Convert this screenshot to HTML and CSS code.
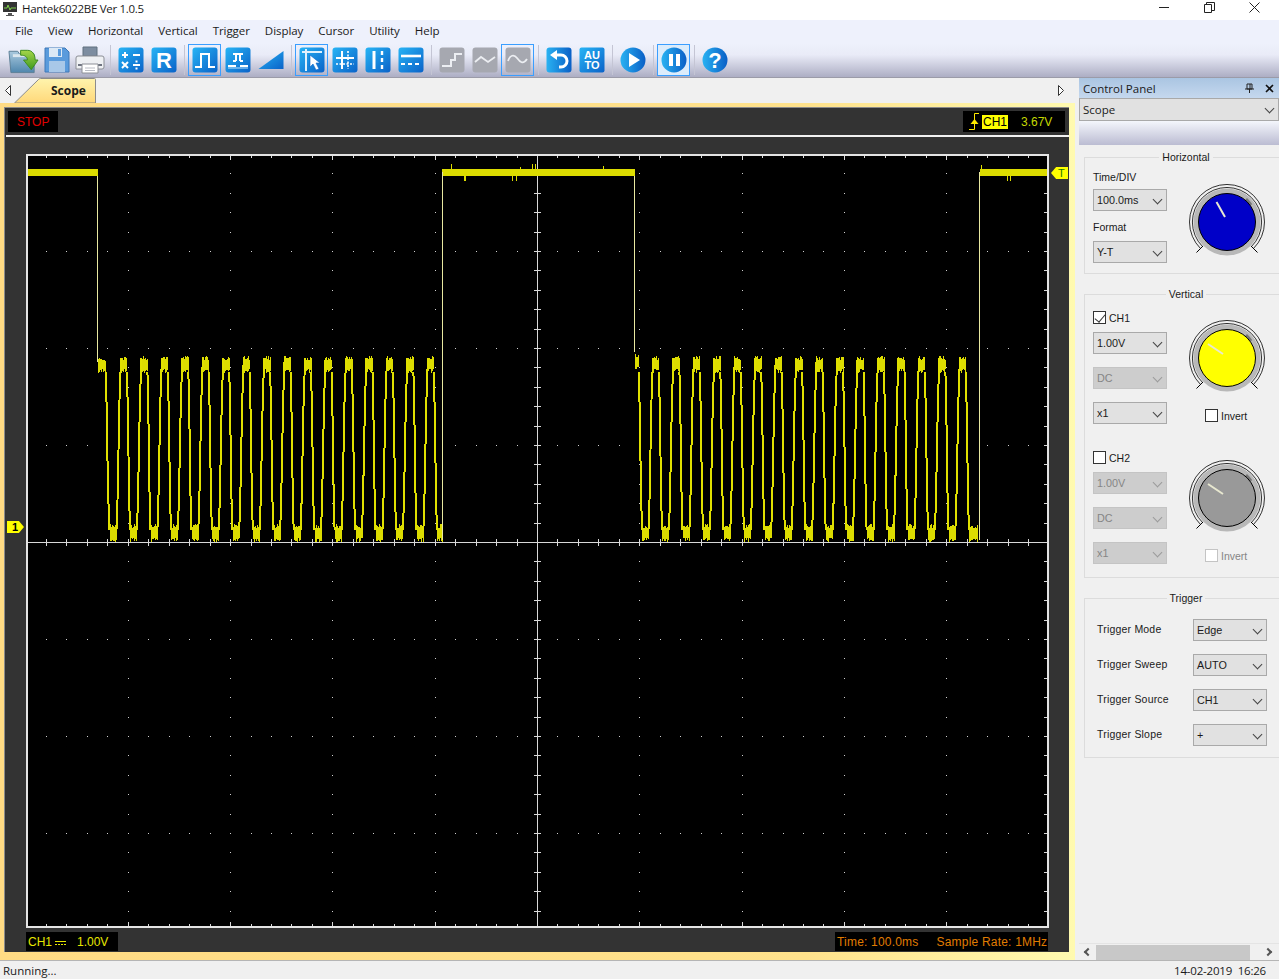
FILE: index.html
```html
<!DOCTYPE html>
<html lang="en">
<head>
    <meta charset="UTF-8">
    <title>Hantek6022BE Ver 1.0.5</title>
    <link rel="stylesheet" href="styles.css">
</head>
<body>
<svg class="defs" width="0" height="0">
    <defs>
        <linearGradient id="blue" x1="0" y1="0" x2="1" y2="1">
            <stop offset="0" stop-color="#27b4f5"/>
            <stop offset="1" stop-color="#0a62c8"/>
        </linearGradient>
        <linearGradient id="round" x1="0" y1="0" x2="1" y2="0">
            <stop offset="0" stop-color="#29b2f2"/>
            <stop offset="1" stop-color="#0a5fc6"/>
        </linearGradient>
        <linearGradient id="folder" x1="0" y1="0" x2="0" y2="1">
            <stop offset="0" stop-color="#a9c9de"/>
            <stop offset="1" stop-color="#4f86ad"/>
        </linearGradient>
        <linearGradient id="green" x1="0" y1="0" x2="0" y2="1">
            <stop offset="0" stop-color="#a5d64a"/>
            <stop offset="1" stop-color="#3f9a1e"/>
        </linearGradient>
        <symbol id="knob" viewBox="0 0 76 76">
            <path d="M11.5 64.5A37.5 37.5 0 1 1 64.5 64.5M13.5 62.5A34.6 34.6 0 1 1 62.5 62.5" fill="none" stroke="#000" stroke-width=".8"/>
            <path d="M14 62L7.5 68.5M62 62L68.5 68.5" stroke="#000" stroke-width="1"/>
            <circle cx="38" cy="38" r="33.5" fill="#b8b8b8"/>
            <path d="M57 15A30 30 0 0 1 62 21" fill="none" stroke="#777" stroke-width="3"/>
            <circle cx="38" cy="38" r="28.5" fill="currentColor" stroke="#000" stroke-width="1"/>
        </symbol>
    </defs>
</svg>

<div class="titlebar">
    <svg class="appicon" width="16" height="16" viewBox="0 0 16 16">
        <rect x="1" y="1" width="14" height="10" fill="#333"/>
        <path d="M2 7h3l1-3 2 5 1-2h5" fill="none" stroke="#7fd04a" stroke-width="1"/>
        <path d="M6 12h4v2H6zM4 14h8v1H4z" fill="#555"/>
    </svg>
    <span class="apptitle">Hantek6022BE Ver 1.0.5</span>
    <div class="winbtns">
        <svg width="11" height="11" viewBox="0 0 11 11"><path d="M0 5.5h10" stroke="#222"/></svg>
        <svg width="11" height="11" viewBox="0 0 11 11"><path d="M.5 2.5h7v8h-7zM2.5 2.5v-2h8v8h-3" fill="none" stroke="#222"/></svg>
        <svg width="11" height="11" viewBox="0 0 11 11"><path d="M.5.5l10 10M10.5.5l-10 10" stroke="#222"/></svg>
    </div>
</div>

<div class="menubar">
    <span>File</span>
    <span>View</span>
    <span>Horizontal</span>
    <span>Vertical</span>
    <span>Trigger</span>
    <span>Display</span>
    <span>Cursor</span>
    <span>Utility</span>
    <span>Help</span>
</div>

<div class="toolbar">
    <div class="tool">
        <svg width="32" height="30" viewBox="0 0 32 30">
            <path d="M1 6h9l2 3h15v19H3z" fill="url(#folder)" stroke="#5c7f96"/>
            <path d="M5 9h22v3H5z" fill="#d9e6ee"/>
            <path d="M13 5h7c5 0 8 4 8 10h3l-7 10-8-10h4c0-3-2-5-7-5z" fill="url(#green)" stroke="#3e8a22"/>
        </svg>
    </div>
    <div class="tool">
        <svg width="26" height="28" viewBox="0 0 26 28">
            <path d="M1 2h20l4 4v20H1z" fill="#5a9bdc" stroke="#3f79b8"/>
            <path d="M5 2h13v9H5z" fill="#dce9f5"/>
            <path d="M14 3h3v7h-3z" fill="#5a9bdc"/>
            <path d="M5 15h16v11H5z" fill="#a8c8e8"/>
        </svg>
    </div>
    <div class="tool">
        <svg width="30" height="30" viewBox="0 0 30 30">
            <path d="M8 2h14v9H8z" fill="#7d8da0" stroke="#60707f"/>
            <path d="M3 11h24q2 0 2 2v9q0 2-2 2H1V13q0-2 2-2z" fill="#eef0f3" stroke="#8c8f96"/>
            <path d="M3 19h24v2H3z" fill="#6f7480"/>
            <path d="M7 19h16v9H7z" fill="#fff" stroke="#8c8f96"/>
            <path d="M10 23h10M10 25.5h10" stroke="#b9bcc4"/>
        </svg>
    </div>
    <i class="sep"></i>
    <div class="tool">
        <svg width="26" height="26" viewBox="0 0 26 26">
            <rect x=".5" y=".5" width="25" height="25" rx="3" fill="url(#blue)"/>
            <g stroke="#fff" stroke-width="2">
                <path d="M4 8h6M7 5v6M15 8h7M4 15l6 6M10 15l-6 6M15 18h7"/>
            </g>
            <path d="M17.5 13.5h2v2h-2zM17.5 20.5h2v2h-2z" fill="#fff"/>
        </svg>
    </div>
    <div class="tool">
        <svg width="26" height="26" viewBox="0 0 26 26">
            <rect x=".5" y=".5" width="25" height="25" rx="3" fill="url(#blue)"/>
            <text x="13" y="20.5" class="tiletext big">R</text>
        </svg>
    </div>
    <i class="sep"></i>
    <div class="tool active">
        <svg width="26" height="26" viewBox="0 0 26 26">
            <rect x=".5" y=".5" width="25" height="25" rx="3" fill="url(#blue)"/>
            <path d="M3 20h6V7h8v13h6" fill="none" stroke="#fff" stroke-width="2"/>
        </svg>
    </div>
    <div class="tool">
        <svg width="26" height="26" viewBox="0 0 26 26">
            <rect x=".5" y=".5" width="25" height="25" rx="3" fill="url(#blue)"/>
            <path d="M8 7h10M11 7v7M15 7v7M8 14h3M15 14h3M3 19h8M15 19h8" fill="none" stroke="#fff" stroke-width="2"/>
            <path d="M3 21h20" stroke="#bfe2fb" stroke-width="1"/>
        </svg>
    </div>
    <div class="tool">
        <svg width="26" height="22" viewBox="0 0 26 22">
            <path d="M.5 20L25.5 2v18z" fill="url(#blue)"/>
        </svg>
    </div>
    <i class="sep"></i>
    <div class="tool active">
        <svg width="26" height="26" viewBox="0 0 26 26">
            <rect x=".5" y=".5" width="25" height="25" rx="3" fill="url(#blue)"/>
            <path d="M3 5h20M7 2v22" stroke="#dff1fd" stroke-width="2"/>
            <path d="M11 8v12l3-3 3 6 3-1-3-6h4z" fill="#fff" stroke="#0a62c8" stroke-width=".6"/>
        </svg>
    </div>
    <div class="tool">
        <svg width="26" height="26" viewBox="0 0 26 26">
            <rect x=".5" y=".5" width="25" height="25" rx="3" fill="url(#blue)"/>
            <path d="M4 11h18M10 4v18" stroke="#fff" stroke-width="2"/>
            <path d="M4 17h18M16 4v18" stroke="#fff" stroke-width="1.6" stroke-dasharray="2 1.5"/>
        </svg>
    </div>
    <div class="tool">
        <svg width="26" height="26" viewBox="0 0 26 26">
            <rect x=".5" y=".5" width="25" height="25" rx="3" fill="url(#blue)"/>
            <path d="M9 4v18" stroke="#fff" stroke-width="3"/>
            <path d="M17 4v18" stroke="#fff" stroke-width="2.4" stroke-dasharray="4 3"/>
        </svg>
    </div>
    <div class="tool">
        <svg width="26" height="26" viewBox="0 0 26 26">
            <rect x=".5" y=".5" width="25" height="25" rx="3" fill="url(#blue)"/>
            <path d="M3 9h20" stroke="#fff" stroke-width="2.6"/>
            <path d="M3 17h20" stroke="#fff" stroke-width="2.2" stroke-dasharray="4 3"/>
        </svg>
    </div>
    <i class="sep"></i>
    <div class="tool">
        <svg width="26" height="26" viewBox="0 0 26 26">
            <rect x=".5" y=".5" width="25" height="25" rx="3" fill="#a6a8b0"/>
            <path d="M3 19h9v-6h4V7h7" fill="none" stroke="#eceef2" stroke-width="2"/>
        </svg>
    </div>
    <div class="tool">
        <svg width="26" height="26" viewBox="0 0 26 26">
            <rect x=".5" y=".5" width="25" height="25" rx="3" fill="#a6a8b0"/>
            <path d="M3 15l6-5 7 5 7-5" fill="none" stroke="#eceef2" stroke-width="1.8"/>
        </svg>
    </div>
    <div class="tool active">
        <svg width="26" height="26" viewBox="0 0 26 26">
            <rect x=".5" y=".5" width="25" height="25" rx="3" fill="#a6a8b0"/>
            <path d="M3 14c2-6 6-7 9-3s6 7 10 1" fill="none" stroke="#eceef2" stroke-width="1.8"/>
        </svg>
    </div>
    <i class="sep"></i>
    <div class="tool">
        <svg width="26" height="26" viewBox="0 0 26 26">
            <rect x=".5" y=".5" width="25" height="25" rx="3" fill="url(#round)"/>
            <path d="M10 8h5a5.5 5.5 0 0 1 0 12h-2" fill="none" stroke="#fff" stroke-width="3"/>
            <path d="M11 3v10l-7-5z" fill="#fff"/>
        </svg>
    </div>
    <div class="tool">
        <svg width="26" height="26" viewBox="0 0 26 26">
            <rect x=".5" y=".5" width="25" height="25" rx="2" fill="url(#blue)"/>
            <text x="13" y="11.5" class="tiletext">AU</text>
            <text x="13" y="22" class="tiletext">TO</text>
        </svg>
    </div>
    <i class="sep"></i>
    <div class="tool">
        <svg width="26" height="26" viewBox="0 0 26 26">
            <circle cx="13" cy="13" r="12.5" fill="url(#round)"/>
            <path d="M9 6l11 7-11 7z" fill="#fff"/>
        </svg>
    </div>
    <i class="sep"></i>
    <div class="tool active pressed">
        <svg width="26" height="26" viewBox="0 0 26 26">
            <circle cx="13" cy="13" r="12.5" fill="url(#round)"/>
            <path d="M8 7h4v12H8zM15 7h4v12h-4z" fill="#fff"/>
        </svg>
    </div>
    <i class="sep"></i>
    <div class="tool">
        <svg width="26" height="26" viewBox="0 0 26 26">
            <circle cx="13" cy="13" r="12.5" fill="url(#round)"/>
            <text x="13" y="20.5" class="tiletext big">?</text>
        </svg>
    </div>
</div>

<div class="main">
    <div class="workspace">
        <div class="tabstrip">
            <svg class="arrow left" width="6" height="11" viewBox="0 0 6 11"><path d="M5.5.5v10L.5 5.5z" fill="#fff" stroke="#333"/></svg>
            <div class="tab">
                <svg class="tabshape" width="82" height="25" viewBox="0 0 82 25">
                    <defs>
                        <linearGradient id="tabfill" x1="0" y1="0" x2="0" y2="1">
                            <stop offset="0" stop-color="#fff4ad"/>
                            <stop offset="1" stop-color="#ffd87a"/>
                        </linearGradient>
                    </defs>
                    <path d="M.5 25L24.5 1.5q1-1 2-1H80.5q1 0 1 1V25z" fill="url(#tabfill)" stroke="#8c8c8c"/>
                </svg>
                <span>Scope</span>
            </div>
            <svg class="arrow right" width="6" height="11" viewBox="0 0 6 11"><path d="M.5.5v10l5-5z" fill="#fff" stroke="#333"/></svg>
        </div>
        <div class="scopeframe">
            <div class="scope">
                <div class="scopetop">
                    <div class="lcd stop">STOP</div>
                    <div class="lcd triginfo">
                        <svg width="12" height="18" viewBox="0 0 12 18">
                            <path d="M11 .5H6.5v16H1" fill="none" stroke="#ffea00"/>
                            <path d="M6.5 6l4 5h-8z" fill="#ffea00"/>
                        </svg>
                        <span class="chip">CH1</span>
                        <span class="trigval">3.67V</span>
                    </div>
                </div>
                <div class="rule"></div>
                <div class="plot">
                    <svg id="screen" width="1019" height="770" viewBox="28 156 1019 770" shape-rendering="crispEdges"></svg>
                    <div class="marker one">1</div>
                    <div class="marker tee">T</div>
                </div>
                <div class="scopebottom">
                    <div class="lcd chinfo">
                        <span>CH1</span>
                        <svg width="11" height="5" viewBox="0 0 11 5">
                            <path d="M0 1.5h11" stroke="#e6e600"/>
                            <path d="M0 4.5h11" stroke="#e6e600" stroke-dasharray="2 1"/>
                        </svg>
                        <span class="chval">1.00V</span>
                    </div>
                    <div class="lcd timeinfo">
                        <span>Time: 100.0ms</span>
                        <span>Sample Rate: 1MHz</span>
                    </div>
                </div>
            </div>
        </div>
    </div>

    <div class="side">
        <div class="sidehead">
            <span>Control Panel</span>
            <div class="headbtns">
                <svg width="9" height="10" viewBox="0 0 9 10"><path d="M2 1h5v5H2zM0 6h9M4.5 6v4M5 1v5" fill="none" stroke="#222"/></svg>
                <svg width="9" height="9" viewBox="0 0 9 9"><path d="M1 1l7 7M8 1L1 8" stroke="#111" stroke-width="1.6"/></svg>
            </div>
        </div>
        <div class="sidecombo">Scope</div>
        <div class="sidestrip"></div>
        <div class="sidebody">
            <fieldset class="group horizontal">
                <legend>Horizontal</legend>
                <div class="cols">
                    <div class="leftcol">
                        <div class="lbl">Time/DIV</div>
                        <div class="combo">100.0ms</div>
                        <div class="lbl second">Format</div>
                        <div class="combo">Y-T</div>
                    </div>
                    <div class="rightcol">
                        <svg class="knob" width="76" height="76" color="#0000c8">
                            <use href="#knob"/>
                            <path d="M27.5 18L36 33" stroke="#e8e8d0" stroke-width="2" shape-rendering="auto"/>
                        </svg>
                    </div>
                </div>
            </fieldset>

            <fieldset class="group vertical">
                <legend>Vertical</legend>
                <div class="cols channel">
                    <div class="leftcol">
                        <label class="chk"><i class="box on"></i>CH1</label>
                        <div class="combo">1.00V</div>
                        <div class="combo off">DC</div>
                        <div class="combo">x1</div>
                    </div>
                    <div class="rightcol">
                        <svg class="knob" width="76" height="76" color="#ffff00">
                            <use href="#knob"/>
                            <path d="M19 24L34 34" stroke="#e8e8d0" stroke-width="2" shape-rendering="auto"/>
                        </svg>
                        <label class="chk inv"><i class="box"></i>Invert</label>
                    </div>
                </div>
                <div class="cols channel">
                    <div class="leftcol">
                        <label class="chk"><i class="box"></i>CH2</label>
                        <div class="combo off">1.00V</div>
                        <div class="combo off">DC</div>
                        <div class="combo off">x1</div>
                    </div>
                    <div class="rightcol">
                        <svg class="knob" width="76" height="76" color="#999999">
                            <use href="#knob"/>
                            <path d="M19 24L34 34" stroke="#e8e8d0" stroke-width="2" shape-rendering="auto"/>
                        </svg>
                        <label class="chk inv dim"><i class="box"></i>Invert</label>
                    </div>
                </div>
            </fieldset>

            <fieldset class="group trigger">
                <legend>Trigger</legend>
                <div class="trigrow"><span>Trigger Mode</span><div class="combo">Edge</div></div>
                <div class="trigrow"><span>Trigger Sweep</span><div class="combo">AUTO</div></div>
                <div class="trigrow"><span>Trigger Source</span><div class="combo">CH1</div></div>
                <div class="trigrow"><span>Trigger Slope</span><div class="combo">+</div></div>
            </fieldset>
        </div>
        <div class="hscroll">
            <i class="chev back"></i>
            <div class="thumb"></div>
            <i class="chev fwd"></i>
        </div>
    </div>
</div>

<div class="statusbar">
    <span>Running...</span>
    <span class="clock">14-02-2019&nbsp; 16:26</span>
</div>
<script src="script.js"></script>
</body>
</html>
```
FILE: styles.css
```css
* {
    margin: 0;
    padding: 0;
    box-sizing: border-box;
}
body {
    width: 1279px;
    height: 979px;
    overflow: hidden;
    background: #f0f0f0;
    color: #1a1a1a;
    font-family: "Open Sans", "Noto Sans", sans-serif;
    font-size: 12px;
}
.defs {
    display: block;
    height: 0;
}

/* title + menu */
.titlebar {
    height: 20px;
    background: #fff;
    display: flex;
    align-items: center;
    padding-left: 2px;
}
.appicon {
    margin-top: -3px;
}
.apptitle {
    margin: -4px 0 0 4px;
    font-size: 11.5px;
    letter-spacing: -0.3px;
}
.winbtns {
    margin-left: auto;
    display: flex;
    gap: 34px;
    padding-right: 19px;
    margin-top: -5px;
}
.menubar {
    height: 23px;
    background: #eef1fc;
    display: flex;
    align-items: center;
    gap: 15px;
    padding: 0 0 2px 15px;
    font-size: 11.5px;
    letter-spacing: -0.05px;
}
.toolbar {
    height: 35px;
    background: linear-gradient(#eef1fc, #e9ebf7 35%, #adaec4);
    border-bottom: 1px solid #9b9ba8;
    display: flex;
    align-items: center;
    padding-left: 7px;
}
.tool {
    width: 33px;
    height: 32px;
    display: flex;
    align-items: center;
    justify-content: center;
    border: 1px solid transparent;
}
.tool.active {
    border-color: #3a9eff;
}
.tool.pressed {
    background: #dcecfb;
}
.sep {
    width: 8px;
    height: 30px;
    background: linear-gradient(#c4c5d4, #c4c5d4) center / 1px 100% no-repeat;
}
.tiletext {
    fill: #fff;
    font-family: "Liberation Sans", sans-serif;
    font-weight: bold;
    font-size: 11px;
    text-anchor: middle;
}
.tiletext.big {
    font-size: 22px;
}

/* left side */
.main {
    height: 882px;
    display: flex;
}
.workspace {
    width: 1075px;
    display: flex;
    flex-direction: column;
}
.tabstrip {
    height: 25px;
    display: flex;
    align-items: flex-end;
    padding-left: 14px;
    position: relative;
}
.arrow {
    position: absolute;
    top: 7px;
}
.arrow.left {
    left: 5px;
}
.arrow.right {
    left: 1058px;
}
.tab {
    width: 82px;
    height: 25px;
    position: relative;
    font-family: "Open Sans", sans-serif;
    font-weight: bold;
    font-size: 12px;
}
.tabshape {
    display: block;
}
.tab span {
    position: absolute;
    left: 37px;
    top: 4px;
}
.scopeframe {
    height: 857px;
    background: linear-gradient(90deg, #ffdb84, #ffe28c 75%, #fffab0);
    padding: 4px 6px 8px 4px;
}
.scope {
    height: 845px;
    background: #333;
    border-left: 1px solid #8a8a8a;
    border-top: 1px solid #8a8a8a;
    font-family: "Liberation Sans", Arial, sans-serif;
}
.scopetop {
    height: 27px;
    padding: 3px 4px 3px 3px;
    display: flex;
    justify-content: space-between;
}
.lcd {
    background: #000;
    height: 21px;
    display: flex;
    align-items: center;
}
.stop {
    width: 50px;
    color: #e00000;
    padding-left: 9px;
}
.triginfo {
    width: 102px;
    padding-left: 5px;
}
.chip {
    background: #ffff00;
    color: #000;
    margin-left: 2px;
    padding: 0 1px;
    height: 14px;
    line-height: 14px;
}
.trigval {
    color: #c6d800;
    margin-left: 13px;
}
.rule {
    height: 2px;
    margin-left: 1px;
    background: #f2f2f2;
}
.plot {
    width: 1023px;
    height: 774px;
    margin: 17px 0 0 21px;
    border: 2px solid #e4e4e4;
    position: relative;
    background: #000;
}
#screen {
    display: block;
}
.marker {
    position: absolute;
    background: #ffff00;
    color: #000;
    font-weight: bold;
    font-size: 11px;
    line-height: 12px;
    height: 12px;
}
.marker.one {
    left: -21px;
    top: 365px;
    width: 17px;
    padding-left: 5px;
    clip-path: polygon(0 0, 70% 0, 100% 50%, 70% 100%, 0 100%);
}
.marker.tee {
    left: 1023px;
    top: 11px;
    width: 17px;
    padding-left: 7px;
    color: #1b7a00;
    font-weight: normal;
    clip-path: polygon(30% 0, 100% 0, 100% 100%, 30% 100%, 0 50%);
}
.scopebottom {
    margin: 4px 0 0 21px;
    width: 1022px;
    display: flex;
    justify-content: space-between;
}
.chinfo {
    width: 92px;
    height: 19px;
    padding-left: 2px;
    color: #e6e600;
}
.chinfo svg {
    margin: 2px 0 0 3px;
}
.chval {
    margin-left: 11px;
}
.timeinfo {
    width: 213px;
    height: 19px;
    padding-left: 2px;
    gap: 18px;
    color: #e07c00;
    letter-spacing: 0.2px;
}

/* control panel */
.side {
    width: 204px;
    padding-left: 4px;
    display: flex;
    flex-direction: column;
    overflow: hidden;
    font-size: 11.5px;
}
.sidehead {
    height: 20px;
    background: linear-gradient(#aac5e2, #c5d8ee);
    display: flex;
    align-items: center;
    padding: 0 5px 0 4px;
}
.headbtns {
    margin-left: auto;
    display: flex;
    align-items: center;
    gap: 11px;
}
.sidecombo {
    height: 23px;
    background: #e1e1e1;
    border: 1px solid #a9a9a9;
    line-height: 21px;
    padding-left: 3px;
    position: relative;
}
.sidestrip {
    height: 24px;
    background: linear-gradient(#f4f6fc, #bbbcd2);
}
.sidebody {
    flex: 1;
    margin-left: -4px;
    padding: 6px 0 0 9px;
    font-family: "Liberation Sans", Arial, sans-serif;
    font-size: 10.5px;
    overflow: hidden;
}
.group {
    width: 204px;
    border: 1px solid #dcdcdc;
    padding: 0;
}
.group legend {
    margin-left: auto;
    margin-right: auto;
    padding: 0 3px;
    line-height: 12px;
}
.horizontal {
    height: 123px;
}
.vertical {
    height: 290px;
    margin-top: 14px;
}
.trigger {
    height: 166px;
    margin-top: 14px;
}
.cols {
    display: flex;
}
.leftcol {
    width: 74px;
    margin-left: 8px;
}
.horizontal .leftcol {
    padding-top: 3px;
}
.rightcol {
    margin-left: 22px;
    width: 76px;
    display: flex;
    flex-direction: column;
    align-items: center;
}
.knob {
    display: block;
}
.lbl {
    line-height: 14px;
    padding-top: 4px;
    height: 18px;
    margin-bottom: 5px;
}
.lbl.second {
    margin-top: 5px;
    margin-bottom: 7px;
    padding-left: 0;
}
.horizontal .rightcol {
    padding-top: 21px;
}
.combo {
    width: 74px;
    height: 22px;
    background: #e1e1e1;
    border: 1px solid #a9a9a9;
    line-height: 20px;
    padding-left: 3px;
    position: relative;
    font-size: 10.8px;
}
.combo::after,
.sidecombo::after {
    content: "";
    position: absolute;
    right: 5px;
    top: 6px;
    width: 6px;
    height: 6px;
    border-right: 1px solid #444;
    border-bottom: 1px solid #444;
    transform: rotate(45deg);
}
.sidecombo::after {
    right: 5px;
    top: 6px;
}
.combo.off {
    background: #cdcdcd;
    border-color: #c4c4c4;
    color: #858585;
}
.combo.off::after {
    border-color: #9b9b9b;
}
.channel {
    height: 140px;
    padding-top: 11px;
}
.channel .combo {
    margin-bottom: 13px;
}
.channel .rightcol {
    padding-top: 9px;
}
.chk {
    display: flex;
    align-items: center;
    height: 13px;
    margin-bottom: 8px;
}
.box {
    width: 13px;
    height: 13px;
    background: #fff;
    border: 1px solid #333;
    margin-right: 3px;
    position: relative;
}
.box.on::after {
    content: "";
    position: absolute;
    left: 3px;
    top: 0;
    width: 5px;
    height: 9px;
    border-right: 1px solid #333;
    border-bottom: 1px solid #333;
    transform: rotate(40deg);
}
.inv {
    margin-top: 13px;
    width: 44px;
    margin-left: 0;
}
.dim {
    color: #858585;
}
.dim .box {
    border-color: #c4c4c4;
}
.trigrow {
    display: flex;
    align-items: center;
    height: 22px;
    margin: 0 0 13px 12px;
}
.trigger legend {
    margin-bottom: 15px;
}
.trigrow span {
    width: 96px;
    margin-top: -2px;
    letter-spacing: 0.2px;
}
.hscroll {
    height: 17px;
    margin-top: 0;
    display: flex;
    align-items: center;
    background: #f0f0f0;
    border-top: 1px solid #e4e4e4;
}
.thumb {
    width: 154px;
    height: 15px;
    background: #c8c8c8;
    margin: 0 auto 0 5px;
}
.chev {
    width: 6px;
    height: 6px;
    border-left: 2px solid #555;
    border-bottom: 2px solid #555;
    margin-left: 6px;
    transform: rotate(45deg);
}
.chev.fwd {
    transform: rotate(225deg);
    margin: 0 8px 0 0;
}

/* status */
.statusbar {
    height: 19px;
    border-top: 1px solid #b5b5b5;
    margin-top: 0;
    display: flex;
    justify-content: space-between;
    align-items: center;
    padding: 0 13px 0 3px;
    font-size: 11.5px;
}
.clock {
    letter-spacing: -0.2px;
}
```
FILE: script.js
```js
// scope screen: grid + captured waveform, coordinates are page pixels
var screen = document.getElementById("screen");

var seed = 7;
function rnd() {
    seed = (seed * 16807) % 2147483647;
    return (seed % 1000) / 1000;
}

var CX = 537, CY = 542, DX = 20.46, DY = 19.4;
var dots = "", axis = "", i, j;

// dots along the major rows and columns
for (j = -3; j <= 4; j++) {
    var row = CY + j * 97;
    if (j === 0) continue;
    for (i = -25; i <= 25; i++) {
        dots += "M" + Math.round(CX + i * DX) + " " + Math.round(row) + "h1";
    }
}
for (j = -5; j <= 5; j++) {
    var col = CX + j * 102.3;
    if (j === 0) continue;
    for (i = -20; i <= 20; i++) {
        dots += "M" + Math.round(col) + " " + Math.round(CY + i * DY) + "h1";
    }
}

// center cross with ticks, short ticks on the edges
axis += "M28 " + CY + ".5H1047M" + CX + ".5 156V926";
for (i = -25; i <= 25; i++) {
    var tx = Math.round(CX + i * DX) + 0.5;
    axis += "M" + tx + " 539V546";
    axis += "M" + tx + " 156V" + (i % 5 === 0 ? 160 : 158);
    axis += "M" + tx + " 926V" + (i % 5 === 0 ? 922 : 924);
}
for (i = -20; i <= 19; i++) {
    var ty = Math.round(CY + i * DY) + 0.5;
    axis += "M" + (CX - 3) + " " + ty + "h7";
    axis += "M1044 " + ty + "h3";
}

var band = "", trace = "", edge = "";

function highLevel(from, to) {
    for (var x = from; x < to; x++) {
        var up = rnd() > 0.97 ? 163 + rnd() * 4 : 169;
        var down = rnd() > 0.97 ? 181 : 176;
        band += "M" + x + ".5 " + Math.round(up) + "V" + down;
    }
}
function fuzz(from, to, y1, y2) {
    for (var x = Math.round(from); x < to; x++) {
        band += "M" + x + ".5 " + Math.round(y1 + rnd() * 4) + "V" + Math.round(y2 + rnd() * 4);
    }
}
// one period: low band, stepped rise, high band, stepped fall
function burst(start, count, lastRise) {
    for (var k = 0; k < count; k++) {
        var x = start + k * DX;
        fuzz(x, x + 6.5, 524, 538);
        var r = x + 6.5;
        trace += "M" + r + " 530L" + (r + 1) + " 500L" + (r + 2) + " 450L" + (r + 3) + " 400L" + (r + 4) + " 372L" + (r + 4.5) + " 358";
        fuzz(x + 10.5, x + 17, 356, 369);
        var f = x + 17;
        trace += "M" + f + " 372L" + (f + 1) + " 420L" + (f + 2) + " 490L" + (f + 3) + " 530";
    }
    var e = start + count * DX;
    fuzz(e, e + lastRise, 524, 538);
}

highLevel(28, 98);
edge += "M97.5 176V362";
fuzz(98, 106, 357, 369);
trace += "M106 372L107 430L108 490L109.5 530";
burst(110, 16, 5);
edge += "M442.5 540V172";
highLevel(442, 635);
edge += "M634.5 176V352";
fuzz(635, 639, 354, 366);
trace += "M639 372L640 430L641 490L642 530";
burst(642, 16, 8);
edge += "M979.5 540V172";
highLevel(980, 1047);

screen.innerHTML =
    '<path d="' + dots + '" stroke="#cfcfcf" fill="none"/>' +
    '<path d="' + axis + '" stroke="#d8d8d8" fill="none"/>' +
    '<path d="' + band + '" stroke="#dcdc00" fill="none"/>' +
    '<path d="' + trace + '" stroke="#e0e000" stroke-width="2" fill="none"/>' +
    '<path d="' + edge + '" stroke="#e8e8a0" fill="none"/>';
```
